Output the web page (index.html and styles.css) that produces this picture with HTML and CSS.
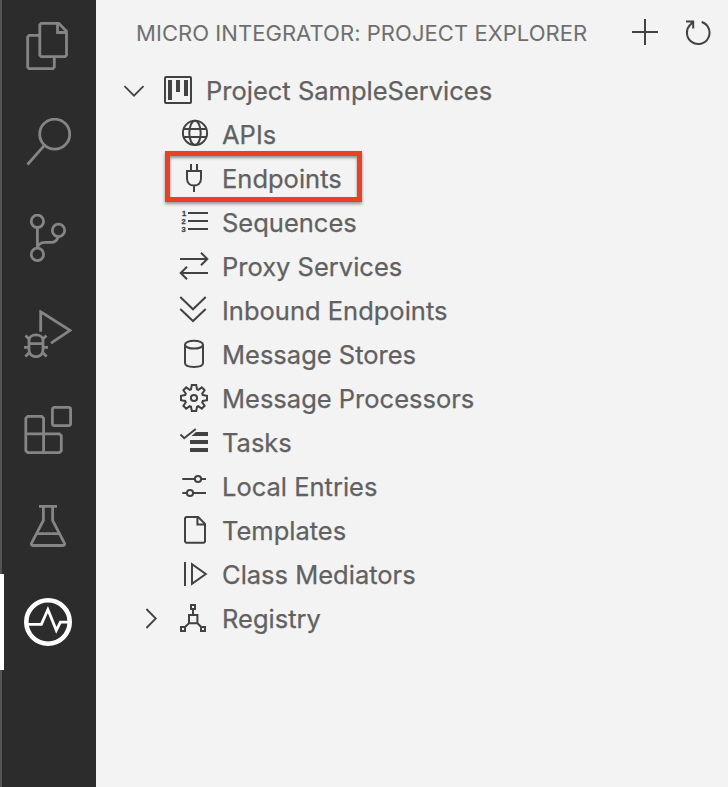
FILE: index.html
```html
<!DOCTYPE html>
<html lang="en">
<head>
<meta charset="utf-8">
<title>Micro Integrator: Project Explorer</title>
<link rel="stylesheet" href="styles.css">
</head>
<body>
<div class="window">
  <nav class="activity-bar">
    <div class="activity"><svg viewBox="0 0 48 48"><path d="M15 13.3H5.2L3.7 14.8V45.2L5.2 46.7H28.8L30.3 45.2V35M17.3 1.3H34.7L42.5 9.2V33.2L41 34.7H17.3L15.8 33.2V2.8ZM33.5 1.5V10.5H42.5"/></svg></div>
    <div class="activity"><svg viewBox="0 0 48 48"><circle cx="30.7" cy="16.2" r="15"/><path d="M20.4 27.3L3.5 46.5"/></svg></div>
    <div class="activity"><svg viewBox="0 0 48 48"><circle cx="13.4" cy="7.3" r="6.2"/><circle cx="34.5" cy="16.4" r="6.2"/><circle cx="13.4" cy="40.4" r="6.2"/><path d="M13.4 13.5V34.2C14.2 30 17 28.4 21 28.4H27C31 28.4 33.2 26.5 34.3 22.6"/></svg></div>
    <div class="activity"><svg viewBox="0 0 48 48"><path d="M16.7 21.8V1.8L46 20.4L27 33.2M3.8 33.6H20.2M5 30.5C5 23 19 23 19 30.5V39.5C19 49 5 49 5 39.5ZM5 29L1.6 25.6M19 29L22.4 25.6M5 37.3H0M19 37.3H24M5.5 42.5L1.4 46.6M18.5 42.5L22.6 46.6"/></svg></div>
    <div class="activity"><svg viewBox="0 0 48 48"><rect x="28.4" y="1.4" width="18.2" height="18.2" rx="2"/><path d="M3.7 10.4H17.7L19.6 12.3V27.8H35.4L37.3 29.7V44.8L35.4 46.6H3.7L1.8 44.7V12.3ZM1.8 27.8H19.6V46.6"/></svg></div>
    <div class="activity"><svg viewBox="0 0 48 48"><path d="M15 4.4H33M19.4 4.4V18.5L7.6 41C7 42.5 7.6 43.5 9 43.5H39C40.4 43.5 41 42.5 40.4 41L28.6 18.5V4.4M12.6 31.6H35.4"/></svg></div>
    <div class="activity activity-current"><svg viewBox="0 0 48 48"><circle class="ring" cx="24" cy="24" r="21.7"/><path d="M4 26.3H17.4L23.9 11.5L32.3 32.3L36.4 24.2H44"/></svg></div>
  </nav>
  <main class="sidebar">
    <header class="header">
      <h1 class="title">MICRO INTEGRATOR: PROJECT EXPLORER</h1>
      <svg class="action" viewBox="0 0 28 28"><path d="M14 1V27M1 14H27"/></svg>
      <svg class="action" viewBox="0 0 28 28"><path d="M17.7 4A11.3 11.3 0 1 1 6.2 6.8L9.2 3.5M2 3.5H9.2V10.5"/></svg>
    </header>
    <div class="tree">
      <div class="row root">
        <svg class="chevron" viewBox="0 0 24 24"><path d="M2.5 7.2L12 16.7L21.5 7.2"/></svg>
        <svg class="icon" viewBox="0 0 32 32"><rect x="3" y="2" width="26" height="26" rx="1"/><path class="solid" d="M6 5h4v20H6zM14 5h4v12h-4zM22 5h4v16h-4z"/></svg>
        <span class="label">Project SampleServices</span>
      </div>
      <div class="row"><svg class="icon" viewBox="0 0 32 32"><circle cx="17" cy="13.9" r="12.1"/><ellipse cx="17" cy="13.9" rx="5.7" ry="12.1"/><path d="M5.6 10H28.4M5.6 18H28.4"/></svg><span class="label">APIs</span></div>
      <div class="row"><svg class="icon" viewBox="0 0 32 32"><path d="M13 1V8M19 1V8M8 8H24M9 8V15.5C9 20 12 22.5 16 22.5S23 20 23 15.5V8M16 22.5V29"/></svg><span class="label marked">Endpoints</span></div>
      <div class="row"><svg class="icon" viewBox="0 0 32 32"><path d="M10 6H30M10 14H30M10 22H30"/><text x="4" y="9">1</text><text x="3.6" y="17">2</text><text x="3.6" y="25">3</text></svg><span class="label">Sequences</span></div>
      <div class="row"><svg class="icon" viewBox="0 0 32 32"><path d="M2 8H29.5M23 1.7L29.3 8L23 14.3M30 22H2.5M9 15.7L2.7 22L9 28.3"/></svg><span class="label">Proxy Services</span></div>
      <div class="row"><svg class="icon" viewBox="0 0 32 32"><path d="M2.3 2L15 14.3L27.7 2M2.3 14L15 26L27.7 14"/></svg><span class="label">Inbound Endpoints</span></div>
      <div class="row"><svg class="icon" viewBox="0 0 32 32"><ellipse cx="16" cy="5.7" rx="9" ry="3.9"/><path d="M7 5.7V24C7 29.2 25 29.2 25 24V5.7"/></svg><span class="label">Message Stores</span></div>
      <div class="row"><svg class="icon" viewBox="0 0 32 32"><path d="M13.8 2H18.2L19 6.2L20.3 6.8L23.8 4.4L26.6 7.2L24.2 10.7L24.8 12L29 12.8V17.2L24.8 18L24.2 19.3L26.6 22.8L23.8 25.6L20.3 23.2L19 23.8L18.2 28H13.8L13 23.8L11.7 23.2L8.2 25.6L5.4 22.8L7.8 19.3L7.2 18L3 17.2V12.8L7.2 12L7.8 10.7L5.4 7.2L8.2 4.4L11.7 6.8L13 6.2Z"/><circle cx="16" cy="15" r="3.1"/></svg><span class="label">Message Processors</span></div>
      <div class="row"><svg class="icon" viewBox="0 0 32 32"><path d="M2.5 7.5L6.2 11.2L17.7 2"/><path class="solid" d="M18 5h12v4H13.5zM12 13h18v4H12zM12 21h18v4H12z"/></svg><span class="label">Tasks</span></div>
      <div class="row"><svg class="icon" viewBox="0 0 32 32"><circle cx="20" cy="8" r="3.1"/><circle cx="12" cy="22" r="3.1"/><path d="M4.3 8H17M23 8H28M4.3 22H9M15 22H28"/></svg><span class="label">Local Entries</span></div>
      <div class="row"><svg class="icon" viewBox="0 0 32 32"><path d="M8.2 2H20.2L27 8.8V26.5L25.8 27.8H8.2L7 26.5V3.2ZM19.4 2V9.6H27"/></svg><span class="label">Templates</span></div>
      <div class="row"><svg class="icon" viewBox="0 0 32 32"><path d="M7 3V27M14 5.2V24.8L27.8 15Z"/></svg><span class="label">Class Mediators</span></div>
      <div class="row">
        <svg class="chevron branch" viewBox="0 0 24 24"><path d="M7.4 2L16.8 11.5L7.4 21"/></svg>
        <svg class="icon" viewBox="0 0 32 32"><path d="M13 2h4v4h-4zM11 12h8.4v8.2H11zM3 24h4v4H3zM23 24h4v4h-4zM15 6v6M11.5 19.8L7 24M19 19.8L23.2 24"/></svg>
        <span class="label">Registry</span>
      </div>
    </div>
  </main>
</div>
</body>
</html>
```
FILE: styles.css
```css
body {
  margin: 0;
  font-family: Inter, "Liberation Sans", sans-serif;
}

.window {
  display: flex;
  height: 787px;
  overflow: hidden;
  background: #f3f3f3;
}

svg {
  display: block;
  flex: none;
  fill: none;
  stroke: #424242;
  stroke-width: 2;
}

.activity-bar {
  box-sizing: border-box;
  width: 96px;
  flex: none;
  background: linear-gradient(to right, #555 2px, #2c2c2c 2px);
}

.activity {
  box-sizing: border-box;
  height: 96px;
  padding: 24px;
}

.activity:first-child {
  height: 94px;
  padding-top: 22px;
}

.activity svg {
  width: 48px;
  height: 48px;
  stroke: #858585;
  stroke-width: 2.8;
}

.activity-current {
  background: linear-gradient(to right, #fff 4px, transparent 4px);
}

.activity-current svg {
  stroke: #fff;
}

.activity-current .ring {
  stroke-width: 4.6;
}

.sidebar {
  flex: 1;
}

.header {
  display: flex;
  height: 69px;
  padding-left: 40px;
}

.title {
  width: 495px;
  margin: 0;
  color: #6f6f6f;
  font-size: 22px;
  font-weight: 400;
  line-height: 66px;
  letter-spacing: 0.05px;
  white-space: nowrap;
}

.action {
  width: 28px;
  height: 28px;
  margin: 18px 25px 0 0;
}

.action:last-child {
  margin-right: 0;
}

.row {
  display: flex;
  align-items: center;
  height: 44px;
  padding-left: 82px;
}

.root {
  padding-left: 26px;
}

.chevron {
  width: 24px;
  height: 24px;
  stroke-width: 1.8;
}

.root .icon {
  margin-left: 16px;
}

.branch {
  margin: 0 15px 0 -39px;
}

.icon {
  width: 32px;
  height: 32px;
}

.icon text {
  fill: #424242;
  stroke: #424242;
  stroke-width: 0.3;
  font-family: "Liberation Sans", sans-serif;
  font-size: 7.5px;
  font-weight: 700;
}

.solid {
  fill: #424242;
  stroke: none;
}

.label {
  margin-left: 12px;
  color: #616161;
  font-size: 25.5px;
  line-height: 44px;
  white-space: nowrap;
  -webkit-text-stroke: 0.25px #616161;
}

.marked {
  position: relative;
}

.marked::before {
  content: "";
  position: absolute;
  top: -6px;
  left: -57px;
  box-sizing: border-box;
  width: 197px;
  height: 51px;
  border: 5px solid #eb4026;
  box-shadow: 0 2px 3px rgba(0, 0, 0, 0.4), inset 0 2px 3px rgba(0, 0, 0, 0.4);
}
```
